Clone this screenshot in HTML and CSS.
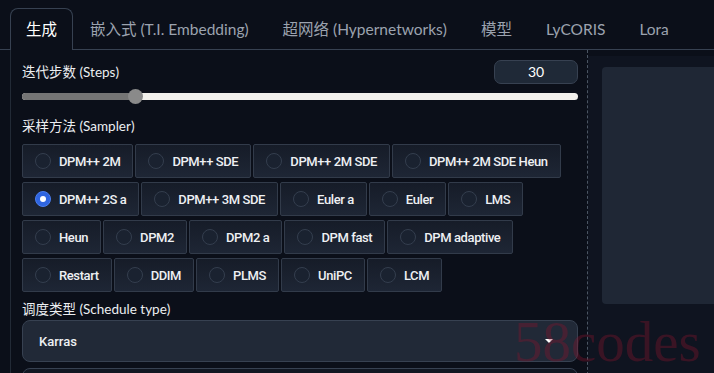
FILE: index.html
```html
<!DOCTYPE html>
<html>
<head>
  <title>txt2img</title>
  <link rel="stylesheet" href="styles.css">
</head>
<body>

  <div class="tabs">
    <div class="tab selected">生成</div>
    <div class="tab">嵌入式 (T.I. Embedding)</div>
    <div class="tab">超网络 (Hypernetworks)</div>
    <div class="tab">模型</div>
    <div class="tab">LyCORIS</div>
    <div class="tab">Lora</div>
  </div>

  <div class="main">
    <div class="panel">
      <div class="steps-row">
        <span class="label">迭代步数 (Steps)</span>
        <div class="number">30</div>
      </div>
      <div class="slider">
        <div class="fill" style="width: 20.3%"></div>
        <div class="thumb" style="left: 20.3%"></div>
      </div>

      <div class="label sampler-label">采样方法 (Sampler)</div>
      <div class="radios">
        <div class="radio-row">
          <label class="radio"><span class="dot"></span>DPM++ 2M</label>
          <label class="radio"><span class="dot"></span>DPM++ SDE</label>
          <label class="radio"><span class="dot"></span>DPM++ 2M SDE</label>
          <label class="radio"><span class="dot"></span>DPM++ 2M SDE Heun</label>
        </div>
        <div class="radio-row">
          <label class="radio"><span class="dot checked"></span>DPM++ 2S a</label>
          <label class="radio"><span class="dot"></span>DPM++ 3M SDE</label>
          <label class="radio"><span class="dot"></span>Euler a</label>
          <label class="radio"><span class="dot"></span>Euler</label>
          <label class="radio"><span class="dot"></span>LMS</label>
        </div>
        <div class="radio-row">
          <label class="radio"><span class="dot"></span>Heun</label>
          <label class="radio"><span class="dot"></span>DPM2</label>
          <label class="radio"><span class="dot"></span>DPM2 a</label>
          <label class="radio"><span class="dot"></span>DPM fast</label>
          <label class="radio"><span class="dot"></span>DPM adaptive</label>
        </div>
        <div class="radio-row">
          <label class="radio"><span class="dot"></span>Restart</label>
          <label class="radio"><span class="dot"></span>DDIM</label>
          <label class="radio"><span class="dot"></span>PLMS</label>
          <label class="radio"><span class="dot"></span>UniPC</label>
          <label class="radio"><span class="dot"></span>LCM</label>
        </div>
      </div>

      <div class="label schedule-label">调度类型 (Schedule type)</div>
      <div class="dropdown">
        <span>Karras</span>
        <span class="caret"></span>
      </div>
      <div class="next-box"></div>
    </div>

    <div class="side">
      <div class="gallery"></div>
    </div>
  </div>

  <div class="watermark">58codes</div>

</body>
</html>
```

FILE: styles.css
```css
body {
  margin: 0;
  background-color: #0b0f19;
  font-family: Lato, "Noto Sans CJK SC", sans-serif;
  color: #e5e7eb;
  overflow: hidden;
}

.tabs {
  display: flex;
  padding: 8px 0 0 10px;
  border-bottom: 1px solid #374151;
}

.tab {
  height: 40px;
  line-height: 40px;
  padding: 0 16px;
  font-size: 15.5px;
  color: #9ca3af;
  border: 1px solid transparent;
  border-bottom: none;
  margin-bottom: -1px;
}

.tab.selected {
  padding: 0 15px;
  color: #ffffff;
  background-color: #0b0f19;
  border-color: #374151;
  border-radius: 8px 8px 0 0;
  height: 41px;
}

.main {
  display: flex;
  margin-left: 10px;
}

.panel {
  width: 556px;
  padding: 10px 9px 0 11px;
  border-left: 1px solid #222a36;
  border-right: 1px dashed #4b5563;
}

.label {
  font-size: 13.5px;
  line-height: 20px;
  color: #eceef1;
}

.steps-row {
  display: flex;
  justify-content: space-between;
  align-items: center;
  height: 24px;
}

.number {
  width: 82px;
  height: 22px;
  line-height: 22px;
  text-align: center;
  font-size: 14px;
  color: #ffffff;
  background-color: #1f2937;
  border: 1px solid #374151;
  border-radius: 7px;
}

.slider {
  position: relative;
  height: 7px;
  margin-top: 9px;
  background-color: #f2f0ec;
  border-radius: 4px;
}

.slider .fill {
  height: 100%;
  background-color: #757575;
  border-radius: 4px 0 0 4px;
}

.slider .thumb {
  position: absolute;
  top: -4px;
  width: 15px;
  height: 15px;
  margin-left: -7px;
  border-radius: 50%;
  background-color: #8a8a8a;
}

.sampler-label {
  margin-top: 16px;
}

.radios {
  display: flex;
  flex-direction: column;
  gap: 4px;
  margin-top: 8px;
}

.radio-row {
  display: flex;
  gap: 2px;
}

.radio {
  display: flex;
  align-items: center;
  gap: 8px;
  height: 32px;
  padding: 0 12px;
  font-family: Roboto, sans-serif;
  font-size: 13px;
  font-weight: 500;
  letter-spacing: -0.4px;
  white-space: nowrap;
  color: #eef0f3;
  background: linear-gradient(to top, #1e2635, #161c28);
  border: 1px solid #323b4a;
  border-radius: 2px;
}

.dot {
  width: 14px;
  height: 14px;
  border-radius: 50%;
  border: 1px solid #343e4e;
  background-color: #1a2230;
}

.dot.checked {
  position: relative;
  background-color: #2f65e0;
  border-color: #4a7ef0;
}

.dot.checked::after {
  content: "";
  position: absolute;
  left: 4px;
  top: 4px;
  width: 6px;
  height: 6px;
  border-radius: 50%;
  background-color: #ffffff;
}

.schedule-label {
  margin-top: 7px;
}

.dropdown {
  display: flex;
  align-items: center;
  justify-content: space-between;
  height: 40px;
  margin-top: 1px;
  padding: 0 24px 0 16px;
  font-family: Roboto, sans-serif;
  font-size: 13px;
  font-weight: 500;
  color: #eef0f3;
  background-color: #212937;
  border: 1px solid #374151;
  border-radius: 8px;
}

.caret {
  width: 0;
  height: 0;
  border-left: 4px solid transparent;
  border-right: 4px solid transparent;
  border-top: 4px solid #ffffff;
}

.next-box {
  height: 20px;
  margin-top: 6px;
  background-color: #111722;
  border: 1px solid #374151;
  border-radius: 8px;
}

.side {
  flex: 1;
  padding: 11px 0 0 14px;
  background-color: #0f1420;
  margin-top: 6px;
}

.gallery {
  height: 237px;
  background-color: #1f2735;
  border-radius: 4px 0 0 4px;
}

.watermark {
  position: absolute;
  left: 514px;
  top: 309px;
  font-family: "Liberation Serif", serif;
  font-size: 57px;
  color: rgba(140, 20, 45, 0.35);
  pointer-events: none;
}
```
